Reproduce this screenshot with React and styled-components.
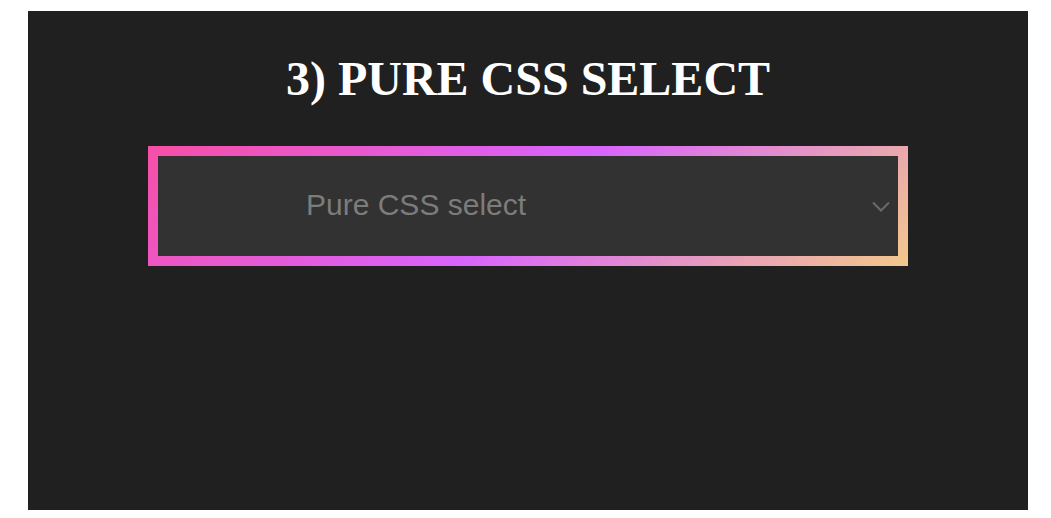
import styled, { createGlobalStyle } from 'styled-components'

const GlobalStyle = createGlobalStyle`
 html, body {
  margin: 0;
  padding: 0;
  background: #ffffff;
 }
`

const Panel = styled.section`
 box-sizing: border-box;
 width: 1000px;
 height: 499px;
 margin: 11px 0 0 28px;
 padding-top: 44px;
 background: #202020;
 display: flex;
 flex-direction: column;
 align-items: center;
`

const Title = styled.h1`
 margin: 0 0 43px;
 font-family: "Liberation Serif", "Times New Roman", serif;
 font-size: 48px;
 line-height: 48px;
 font-weight: 700;
 color: #ffffff;
 text-transform: uppercase;
`

const SelectFrame = styled.label`
 box-sizing: border-box;
 width: 760px;
 height: 120px;
 padding: 10px;
 background: linear-gradient(140deg, #f74fa6 0%, #d864fd 50%, #f2c98a 100%);
 display: flex;
`

const SelectInner = styled.div`
 flex: 1;
 display: flex;
 align-items: center;
 background: #323232;
`

const NativeSelect = styled.select`
 appearance: none;
 -webkit-appearance: none;
 flex: 1;
 align-self: stretch;
 margin: 0;
 padding: 0 0 3px 148px;
 border: none;
 outline: none;
 background: transparent;
 font-family: "Liberation Sans", Arial, sans-serif;
 font-size: 30px;
 color: #7c7c7c;
 cursor: pointer;
`

const Chevron = styled.svg`
 flex: none;
 width: 18px;
 height: 11px;
 margin: 0 8px 0 0;
 pointer-events: none;
`

export default function App() {
 return (
  <>
   <GlobalStyle />
   <Panel>
    <Title>3) Pure CSS Select</Title>
    <SelectFrame>
     <SelectInner>
      <NativeSelect defaultValue="">
       <option value="">Pure CSS select</option>
       <option value="1">Option 1</option>
       <option value="2">Option 2</option>
      </NativeSelect>
      <Chevron viewBox="0 0 18 11">
       <path d="M1 1.5 L9 9.5 L17 1.5" fill="none" stroke="#6a6a6a" strokeWidth="2" />
      </Chevron>
     </SelectInner>
    </SelectFrame>
   </Panel>
  </>
 )
}
